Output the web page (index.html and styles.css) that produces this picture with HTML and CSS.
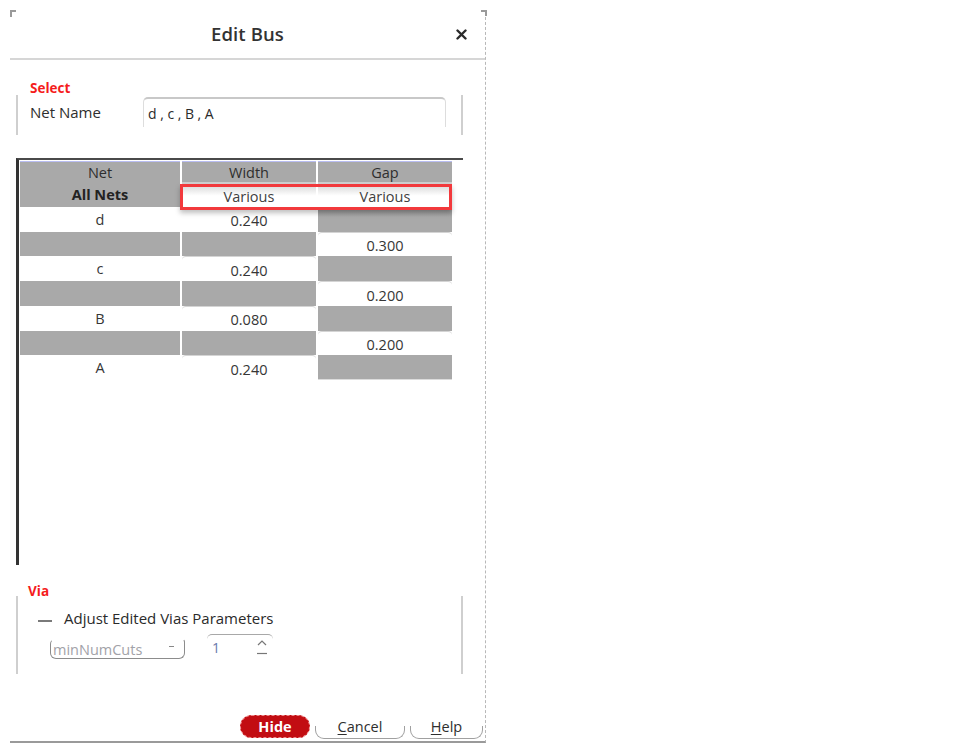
FILE: index.html
```html
<!DOCTYPE html>
<html>
<head>
<meta charset="utf-8">
<link rel="stylesheet" href="styles.css">
</head>
<body>
<div class="dialog">
  <div class="titlebar">
    <div></div>
    <div class="title">Edit Bus</div>
    <div class="close">
      <svg width="11" height="11" viewBox="0 0 11 11"><path d="M1.5 1.5 L9.5 9.5 M9.5 1.5 L1.5 9.5" stroke="#2a2a2a" stroke-width="2.4" stroke-linecap="round"/></svg>
    </div>
  </div>

  <div class="section-label sel">Select</div>
  <div class="group sel-group">
    <div class="field-label">Net Name</div>
    <div class="textfield">d,c,B,A</div>
  </div>

  <div class="table-frame">
    <div class="grid">
      <div class="c hd top">Net</div>
      <div class="c hd top">Width</div>
      <div class="c hd top">Gap</div>

      <div class="c hd bold">All Nets</div>
      <div class="c var">Various</div>
      <div class="c var">Various</div>

      <div class="c w">d</div>
      <div class="c in">0.240</div>
      <div class="c g shadow"></div>

      <div class="c g"></div>
      <div class="c g"></div>
      <div class="c in">0.300</div>

      <div class="c w">c</div>
      <div class="c in">0.240</div>
      <div class="c g"></div>

      <div class="c g"></div>
      <div class="c g"></div>
      <div class="c in">0.200</div>

      <div class="c w">B</div>
      <div class="c in">0.080</div>
      <div class="c g"></div>

      <div class="c g"></div>
      <div class="c g"></div>
      <div class="c in">0.200</div>

      <div class="c w">A</div>
      <div class="c in">0.240</div>
      <div class="c g last"></div>
    </div>
    <div class="highlight"></div>
  </div>

  <div class="section-label via">Via</div>
  <div class="group via-group">
    <div class="check-row">
      <span class="dash"></span>
      <span class="check-label">Adjust Edited Vias Parameters</span>
    </div>
    <div class="param-row">
      <div class="combo">
        <span>minNumCuts</span>
        <span class="combo-arrow"></span>
      </div>
      <div class="spin">
        <span class="spin-val">1</span>
        <svg class="spin-ctl" width="12" height="18" viewBox="0 0 12 18"><polyline points="2,7 6,3 10,7" fill="none" stroke="#777" stroke-width="1.2"/><line x1="1" y1="15.5" x2="11" y2="15.5" stroke="#777" stroke-width="1.2"/></svg>
      </div>
    </div>
  </div>

  <div class="buttons">
    <div class="btn hide">Hide</div>
    <div class="btn plain cancel"><u>C</u>ancel</div>
    <div class="btn plain help"><u>H</u>elp</div>
  </div>
</div>
</body>
</html>
```

FILE: styles.css
```css
html, body {
  margin: 0;
  padding: 0;
  background: #ffffff;
}

body {
  font-family: "Open Sans", "Noto Sans", sans-serif;
  color: #2b2b2b;
}

.dialog {
  position: relative;
  width: 475px;
  height: 729px;
  margin: 12px 0 0 10px;
  border-right: 1px dashed #b8b8b8;
  border-bottom: 2px solid #9a9a9a;
  display: flex;
  flex-direction: column;
}

.dialog::before {
  content: "";
  position: absolute;
  left: 0;
  top: -2px;
  width: 4px;
  height: 5px;
  border-top: 2px solid #9a9a9a;
  border-left: 2px solid #9a9a9a;
}

.dialog::after {
  content: "";
  position: absolute;
  right: -2px;
  top: -2px;
  width: 4px;
  height: 4px;
  border-top: 2px solid #9a9a9a;
  border-right: 2px solid #9a9a9a;
}

/* title bar */
.titlebar {
  height: 46px;
  border-bottom: 2px solid #d6d6d6;
  display: grid;
  grid-template-columns: 1fr auto 1fr;
  align-items: center;
}

.title {
  font-size: 18.5px;
  font-weight: 600;
  color: #333333;
  letter-spacing: 0.1px;
  margin-top: -3px;
}

.close {
  justify-self: end;
  margin-right: 18px;
  display: flex;
  align-items: center;
  margin-top: -1px;
}

/* section labels */
.section-label {
  font-size: 13.5px;
  font-weight: 700;
  color: #f51c1c;
  line-height: 16px;
}

.section-label.sel {
  margin-top: 20px;
  margin-left: 20px;
}

.section-label.via {
  margin-top: 18px;
  margin-left: 18px;
}

/* group boxes */
.group {
  margin-left: 6px;
  width: 443px;
  border-left: 2px solid #cfcfcf;
  border-right: 2px solid #cfcfcf;
}

.sel-group {
  margin-top: -1px;
  height: 40px;
  display: flex;
  align-items: flex-start;
}

.field-label {
  margin-left: 12px;
  width: 113px;
  padding-top: 8px;
  font-size: 15px;
  line-height: 18px;
  color: #2e2e2e;
}

.textfield {
  margin-top: 2px;
  width: 303px;
  height: 30px;
  box-sizing: border-box;
  border-top: 2px solid #c8c8c8;
  border-left: 1px solid #dddddd;
  border-right: 1px solid #dddddd;
  border-radius: 5px 5px 0 0;
  padding: 6px 0 0 4px;
  font-size: 14px;
  line-height: 18px;
  letter-spacing: 3.6px;
  color: #2a2a2a;
}

/* table */
.table-frame {
  position: relative;
  margin-top: 23px;
  margin-left: 6px;
  width: 443px;
  height: 404px;
  border-top: 2px solid #4a4a4a;
  border-left: 3px solid #333333;
  padding: 1px 0 0 1px;
  box-sizing: content-box;
}

.grid {
  display: grid;
  grid-template-columns: 160px 134px 134px;
  grid-template-rows: 21px 25px repeat(7, 24.72px);
  column-gap: 2px;
  width: 432px;
  background: #ffffff;
}

.c {
  display: flex;
  align-items: center;
  justify-content: center;
  font-size: 14.5px;
  color: #363636;
  box-sizing: border-box;
}

.hd {
  background: #a9a9a9;
  color: #2e2e2e;
}

.hd.top {
  border-top: 1px solid #b9bdf2;
  padding-top: 1px;
}

.bold {
  font-weight: 700;
  color: #222222;
}

.var {
  background: linear-gradient(#cdcdcd 0%, #e8e8e8 30%, #ffffff 55%);
  color: #404040;
  padding-top: 3px;
}

.w {
  background: #ffffff;
}

.g {
  background: #a9a9a9;
}

.g.shadow {
  background: linear-gradient(#8f8f8f 0%, #a9a9a9 40%);
}

.g.last {
  border-bottom: 1px solid #dcdcdc;
}

.in {
  background: #ffffff;
  border-top: 1px solid #d4d4d4;
  border-radius: 4px 4px 0 0;
  padding-top: 2px;
}

.highlight {
  position: absolute;
  left: 161px;
  top: 24px;
  width: 272px;
  height: 26px;
  box-sizing: border-box;
  border: 3px solid #f2393c;
  box-shadow: 0 3px 5px rgba(0, 0, 0, 0.25);
}

/* via group */
.via-group {
  margin-top: -3px;
  height: 78px;
}

.check-row {
  display: flex;
  align-items: center;
  padding-top: 13px;
  height: 18px;
}

.dash {
  width: 14px;
  height: 2px;
  background: #7a7a7a;
  margin-left: 20px;
  margin-top: 6px;
}

.check-label {
  margin-left: 12px;
  font-size: 15px;
  color: #2a2a2a;
}

.param-row {
  display: flex;
  align-items: flex-start;
  margin-top: 7px;
  padding-left: 32px;
}

.combo {
  margin-top: 5px;
  width: 135px;
  height: 20px;
  box-sizing: border-box;
  border: 1px solid #8c8c8c;
  border-top-color: transparent;
  border-radius: 5px 3px 6px 6px;
  display: flex;
  align-items: center;
  justify-content: space-between;
  padding: 0 10px 0 2px;
  font-size: 14.5px;
  color: #a2a2a8;
}

.combo-arrow {
  width: 5px;
  height: 1px;
  background: #888888;
  margin-top: -5px;
}

.spin {
  margin-left: 22px;
  width: 66px;
  height: 24px;
  box-sizing: border-box;
  border-top: 1px solid #a8a8a8;
  border-radius: 5px 5px 0 0;
  display: flex;
  align-items: center;
  justify-content: space-between;
  padding: 2px 5px 0 5px;
}

.spin-val {
  font-size: 14px;
  color: #6a78ab;
}

.spin-ctl {
  margin-top: -2px;
}

/* buttons */
.buttons {
  margin-top: 41px;
  display: flex;
  justify-content: flex-end;
  gap: 5px;
  padding-right: 2px;
}

.btn {
  position: relative;
  height: 23px;
  box-sizing: border-box;
  display: flex;
  align-items: center;
  justify-content: center;
  font-size: 14.5px;
}

.hide {
  width: 70px;
  background: #c20d12;
  border: 1px dashed #ee8a8a;
  border-radius: 12px;
  color: #ffffff;
  font-weight: 700;
}

.plain {
  color: #2e2e2e;
}

.plain::after {
  content: "";
  position: absolute;
  left: 0;
  right: 0;
  bottom: -1px;
  height: 12px;
  border: 1px solid #a0a0a0;
  border-top: none;
  border-radius: 0 0 9px 9px;
}

.cancel {
  width: 90px;
}

.help {
  width: 73px;
}

u {
  text-decoration-thickness: 1px;
  text-underline-offset: 2px;
}
```
